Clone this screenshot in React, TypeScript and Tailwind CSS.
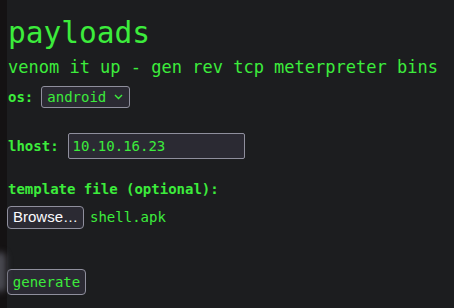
import React from "react";

export default function App() {
  return (
    <div className="flex h-[308px] w-[454px] overflow-hidden bg-[#1c1d1f] font-['DejaVu_Sans_Mono',monospace] text-[#3cec3c]">
      <div className="relative w-[7px] shrink-0 bg-[#141213]">
        <div className="absolute left-[-6px] top-[252px] h-[40px] w-[12px] rounded-full bg-[#4a4a52] blur-[3px]" />
      </div>
      <div className="flex flex-1 flex-col pl-[1px]">
        <h1 className="mt-[15px] text-[29.5px] leading-[36px]">payloads</h1>
        <p className="mt-[5px] text-[17px] leading-[22px]">venom it up - gen rev tcp meterpreter bins</p>
        <div className="mt-[8px] flex items-center gap-[8px]">
          <span className="text-[14px] font-bold">os:</span>
          <div className="flex h-[22px] w-[89px] items-center justify-between rounded-[3px] border border-[#8f8f9d] bg-[#2b2a33] pl-[5px] pr-[6px] text-[14px]">
            <span>android</span>
            <svg width="9" height="6" viewBox="0 0 9 6" fill="none" stroke="currentColor" strokeWidth="1.4">
              <path d="M1 1 L4.5 4.5 L8 1" />
            </svg>
          </div>
        </div>
        <div className="mt-[25px] flex items-center gap-[9px]">
          <span className="text-[14px] font-bold">lhost:</span>
          <div className="flex h-[26px] w-[177px] items-center rounded-[2px] border border-[#8f8f9d] bg-[#2b2a33] px-[4px] text-[14px]">
            10.10.16.23
          </div>
        </div>
        <div className="mt-[21px] text-[14px] font-bold leading-[18px]">template file (optional):</div>
        <div className="mt-[8px] flex items-center gap-[6px]">
          <div className="ml-[-1px] flex h-[23px] w-[77px] items-center justify-center rounded-[4px] border border-[#8f8f9d] bg-[#2b2a33] font-['Liberation_Sans',sans-serif] text-[15px] text-[#fbfbfe]">
            Browse…
          </div>
          <span className="text-[14px]">shell.apk</span>
        </div>
        <div className="mt-[40px]">
          <div className="ml-[-1px] flex h-[26px] w-[79px] items-center justify-center rounded-[4px] border border-[#8f8f9d] bg-[#2b2a33] text-[14px]">
            generate
          </div>
        </div>
      </div>
    </div>
  );
}
